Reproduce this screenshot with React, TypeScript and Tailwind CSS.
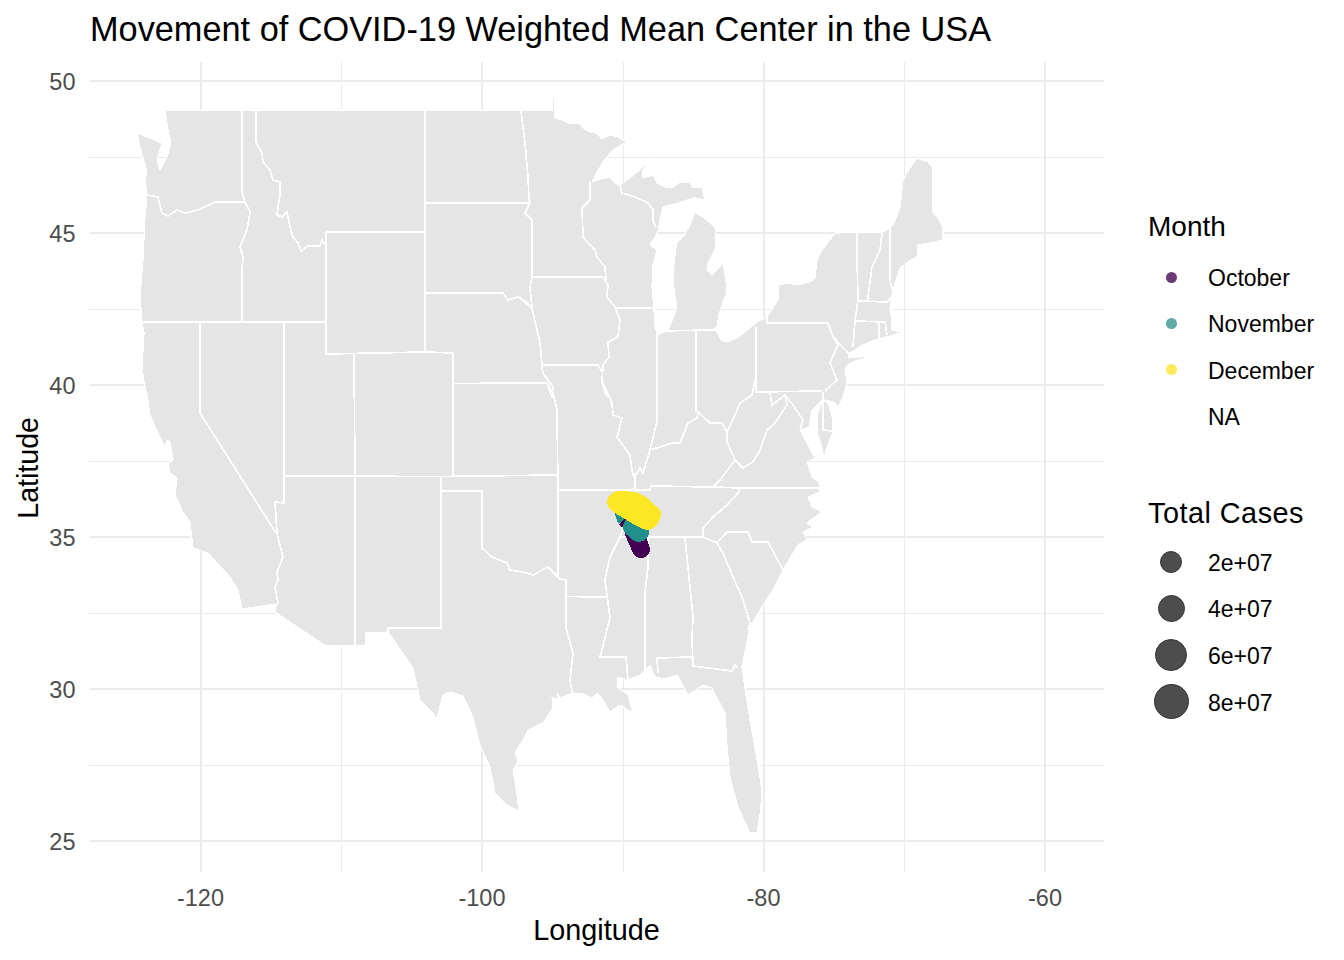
import React from "react";

const outline = `M165,110.5 L552,110.5 L552,98 L555,98 L555,118 L562,120 L568,123 L578,123 L584,129 L590,132 L596,133 L602,139 L610,135 L618,137 L627,142 L613,150 L603,162 L597,172 L592,182 L600,179 L610,177 L615,183 L620,185 L627,180 L640,170 L652,157 L643,170 L643,178 L653,175 L657,183 L665,187 L672,188 L680,182 L690,182 L692,187 L702,188 L705,200 L695,198 L687,200 L675,204 L663,207 L660,220 L658,232 L650,245 L657,250 L653,265 L652,287 L654,310 L655,327 L658,335 L668,330 L673,318 L677,307 L674,290 L673,273 L675,255 L677,242 L683,237 L690,225 L695,212 L703,217 L715,227 L716,240 L715,250 L708,263 L707,270 L712,275 L717,270 L723,263 L726,280 L727,293 L723,302 L719,314 L717,327 L713,330 L717,332 L722,341 L727,342 L737,338 L747,330 L757,322 L767,317 L778,300 L778,285 L788,283 L798,285 L810,282 L815,278 L817,260 L822,250 L835,233 L883,232 L893,225 L898,213 L900,207 L903,180 L910,168 L917,158 L928,162 L933,168 L933,212 L938,218 L943,228 L943,240 L930,243 L918,245 L917,257 L908,262 L900,268 L896,280 L893,290 L890,308 L892,322 L892,330 L902,332 L887,337 L875,340 L863,345 L850,353 L848,358 L870,356 L853,362 L848,365 L845,368 L847,383 L843,397 L838,408 L835,403 L827,400 L832,415 L833,432 L826,450 L824,459 L822,448 L817,432 L817,417 L822,400 L812,410 L809,427 L800,430 L807,443 L815,458 L807,462 L812,477 L820,483 L820,492 L808,497 L812,507 L822,512 L807,523 L813,527 L803,532 L807,540 L798,545 L790,558 L783,570 L773,590 L762,607 L750,627 L746,647 L742,667 L746,695 L750,720 L755,748 L760,777 L762,793 L760,815 L757,833 L750,833 L744,820 L738,807 L730,777 L727,747 L725,713 L718,700 L712,688 L703,685 L696,690 L688,695 L677,675 L665,679 L655,677 L650,665 L640,675 L628,680 L618,677 L617,687 L628,695 L633,713 L620,705 L610,712 L603,700 L597,693 L592,698 L583,694 L573,693 L560,698 L557,693 L558,700 L552,697 L553,708 L543,723 L528,730 L522,742 L515,752 L518,762 L513,770 L515,780 L519,811 L507,805 L495,793 L490,767 L480,745 L473,717 L463,696 L450,692 L443,695 L437,718 L420,700 L413,668 L397,645 L388,632 L366,633 L365,646 L326,646 L275,612 L275,604 L242,609 L238,590 L230,577 L217,563 L208,553 L193,548 L190,522 L183,512 L175,495 L177,478 L170,473 L168,463 L173,460 L170,442 L167,440 L165,447 L160,437 L150,415 L148,400 L144,382 L142,367 L144,333 L142,322 L140,297 L143,260 L145,217 L147,195 L145,180 L147,172 L140,147 L137,133 L162,143 L157,160 L160,170 L167,157 L171,142 L168,130 L166,117 Z`;

const borders = [
  "242,111 242,192 245,202 250,212 247,230 240,247 243,257 242,270 242,322",
  "147,195 158,197 162,213 168,216 177,210 185,213 198,210 215,202 245,202",
  "256,111 256,142 262,153 263,162 270,170 273,180 280,182 280,195 278,207 277,215 282,217 287,212 290,227 293,237 298,243 301,251 308,246 320,246 322,240 326,246",
  "326,232 425,232",
  "326,232 326,354 425,352",
  "142,322 326,322",
  "425,111 425,352",
  "425,203 530,203",
  "425,293 503,293 508,300 518,297 528,303 530,307",
  "521,111 525,143 528,177 529,200 530,203 525,213 532,220 532,277 603,277",
  "532,277 530,288 532,307",
  "520,298 532,308 537,330 540,343 542,365 598,365 602,372",
  "542,366 543,373 553,387 552,397 547,383",
  "453,353 425,352",
  "453,353 453,476",
  "453,383.5 547,383 553,393 557,410 558,490 558,577",
  "200,322 200,413 276,533",
  "284,322 284,503 275,502 277,533 283,557 277,572 278,580 275,587 278,603 275,608",
  "354,354 355,476 355,646",
  "284,476 440,476.5 557,475",
  "441,477 441,491 482,491 482,548 492,557 507,563 510,570 523,572 533,575 548,567 560,579 566,580 566,628 573,653 570,680 572,692",
  "441,491 441,628 388,628 388,632",
  "566,596.5 607,597",
  "558,490 630,490 635,488 635,473",
  "635,490 650,490 651,486 713,487 740,488 820,488",
  "635,490 620,537 610,557 605,580 610,618 600,657 626,657 628,680",
  "620,537 703,537 703,528 713,517 727,505 738,493 740,488",
  "703,537 717,543 727,532 748,532 752,542 768,542 783,570",
  "717,543 723,553 733,577 742,597 747,613 750,623 748,630",
  "648,537 648,567 645,593 645,676",
  "685,537 693,617 692,637 693,666 732,671 735,665 738,668",
  "657,658 692,657 693,666",
  "657,658 658,673",
  "602,380 612,403 613,415 622,418 617,437 630,455 632,470 634,478",
  "603,365 602,383 607,397",
  "634,478 640,468 643,473 650,450 657,422 657,333",
  "650,450 660,447 672,443 680,443 688,423 697,418 698,412 710,423 722,423 727,432 727,442 735,460 720,480 713,487",
  "727,432 735,415 740,403 752,395 755,380",
  "735,460 743,468 753,462 760,450 767,430 775,423 787,405 785,395 772,405 770,393",
  "755,392 822,391",
  "785,395 793,405 803,420 800,430",
  "696,412 696,331",
  "657,331 713,330",
  "756,327 756,393",
  "615,308 652,308",
  "603,277 608,285 607,297 615,307 620,320 618,337 608,342 609,357 603,365",
  "590,182 590,200 582,208 583,237 595,250 597,257 605,267 606,280",
  "620,185 622,193 635,197 648,203 653,210 653,220 656,228",
  "767,317 767,323 828,323 833,337 838,345 830,363 837,380 825,391",
  "833,337 850,355",
  "823,392 823,430 832,431",
  "824,400 833,408",
  "857,233 857,257 858,300 855,320 853,347",
  "882,233 880,250 872,267 868,297 868,301",
  "885,225 890,225 890,280 893,293",
  "858,301 887,302 892,297",
  "855,321 885,322 887,335",
  "879,322 879,342",
];

const majorX = [200.5, 482, 763.5, 1045];
const minorX = [341.5, 623, 904.5];
const majorY = [81, 233, 385, 537, 689, 841];
const minorY = [157, 309, 461, 613, 765];
const latLabels: [number, string][] = [[81, "50"], [233, "45"], [385, "40"], [537, "35"], [689, "30"], [841, "25"]];
const lonLabels: [number, string][] = [[200.5, "-120"], [482, "-100"], [763.5, "-80"], [1045, "-60"]];

const months = [
  { label: "October", color: "#6d3a7a" },
  { label: "November", color: "#5fa9a6" },
  { label: "December", color: "#fdeb5c" },
  { label: "NA", color: "" },
];
const totals = [
  { label: "2e+07", r: 10.5 },
  { label: "4e+07", r: 13 },
  { label: "6e+07", r: 15.5 },
  { label: "8e+07", r: 17 },
];

function MapChart() {
  return (
    <svg width={1108} height={853} viewBox="40 62 1108 853" className="block" shapeRendering="crispEdges">
      {minorX.map((x) => <line key={x} x1={x} x2={x} y1={62} y2={872} stroke="#ebebeb" strokeWidth={1} />)}
      {minorY.map((y) => <line key={y} x1={89} x2={1104} y1={y} y2={y} stroke="#ebebeb" strokeWidth={1} />)}
      {majorX.map((x) => <line key={x} x1={x} x2={x} y1={62} y2={872} stroke="#ebebeb" strokeWidth={2} />)}
      {majorY.map((y) => <line key={y} x1={89} x2={1104} y1={y} y2={y} stroke="#ebebeb" strokeWidth={2} />)}
      <path d={outline} fill="#e5e5e5" stroke="#ffffff" strokeWidth={1.2} strokeLinejoin="round" />
      {borders.map((b, i) => (
        <polyline key={i} points={b} fill="none" stroke="#ffffff" strokeWidth={1.7} strokeLinejoin="round" />
      ))}
      <g fill="none" strokeLinecap="round">
        <line x1={634} y1={533} x2={641} y2={549} stroke="#440154" strokeWidth={18} />
        <polygon points="614,512 618,523 640,530 640,510 620,505" fill="#21908c" />
        <polygon points="619,525 627,530 637,528 640,522 625,518" fill="#440154" />
        <line x1={633} y1={527} x2={639} y2={532} stroke="#21908c" strokeWidth={20} />
        <path
          d="M607,502 Q608,495 613,493 Q618,490 623,491 L635,492 Q642,494 647,498 L657,507 Q661,510 661,513 Q661,519 658,523 Q653,530 647,530 Q641,529 635,525 L623,518 L615,513 Q608,509 607,502 Z"
          fill="#fde725"
        />
      </g>
      <g fill="#4d4d4d" fontFamily="'Liberation Sans', Arial, sans-serif" fontSize={23.5} shapeRendering="auto">
        {latLabels.map(([y, t]) => <text key={t} x={75.5} y={y + 8.5} textAnchor="end">{t}</text>)}
        {lonLabels.map(([x, t]) => <text key={t} x={x} y={906} textAnchor="middle">{t}</text>)}
      </g>
    </svg>
  );
}

export default function App() {
  return (
    <div className="flex w-[1344px] h-[960px] bg-white text-black font-['Liberation_Sans',Arial,sans-serif] overflow-hidden">
      <div className="flex flex-col w-[1148px]">
        <div className="h-[62px] pl-[90px] pt-[9px] text-[34.3px] leading-[40px] whitespace-nowrap">
          Movement of COVID-19 Weighted Mean Center in the USA
        </div>
        <div className="flex">
          <div className="w-[40px] h-[853px] flex items-center justify-start pl-[14px] pb-[42px]">
            <span className="[writing-mode:vertical-rl] rotate-180 text-[28.6px] leading-[28px] whitespace-nowrap">Latitude</span>
          </div>
          <MapChart />
        </div>
        <div className="pl-[89px] w-[1104px] -mt-[1px] text-center text-[28.8px] leading-[32px]">Longitude</div>
      </div>
      <div className="flex flex-col pt-[208px]">
        <div className="h-[38px] text-[28px] leading-[38px]">Month</div>
        <div className="flex flex-col mt-[8px]">
          {months.map((m) => (
            <div key={m.label} className="flex items-center h-[46.3px]">
              <div className="w-[46px] flex justify-center">
                <div className="w-[11px] h-[11px] rounded-full" style={{ backgroundColor: m.color || "transparent" }} />
              </div>
              <span className="ml-[14px] pt-[2px] text-[23px] leading-[28px] whitespace-nowrap">{m.label}</span>
            </div>
          ))}
        </div>
        <div className="h-[38px] mt-[55px] text-[28.8px] leading-[38px] tracking-[0.5px] whitespace-nowrap">Total Cases</div>
        <div className="flex flex-col mt-[6px]">
          {totals.map((t) => (
            <div key={t.label} className="flex items-center h-[46.7px]">
              <div className="w-[46px] flex justify-center">
                <div
                  className="rounded-full bg-[#4d4d4d] border border-[#333333]"
                  style={{ width: t.r * 2 + 1, height: t.r * 2 + 1, flexShrink: 0 }}
                />
              </div>
              <span className="ml-[14px] pt-[2px] text-[23px] leading-[28px]">{t.label}</span>
            </div>
          ))}
        </div>
      </div>
    </div>
  );
}
